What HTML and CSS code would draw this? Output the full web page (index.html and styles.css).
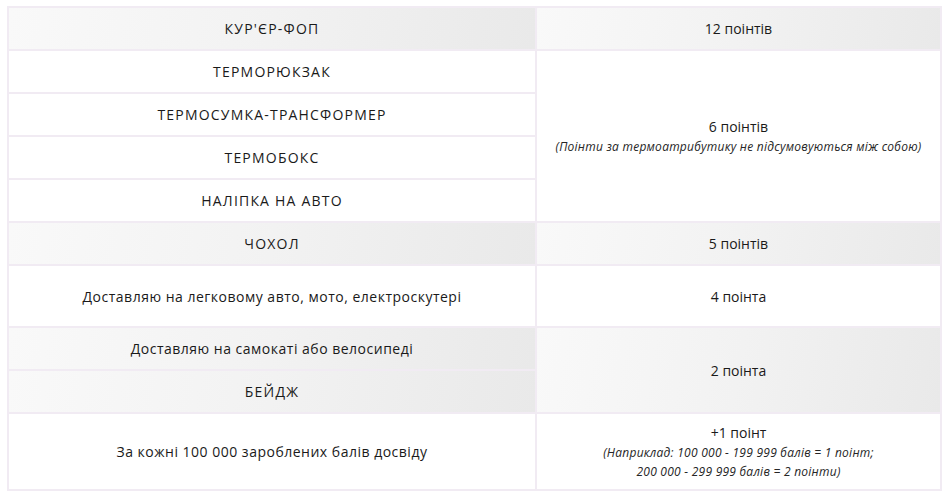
FILE: index.html
```html
<!DOCTYPE html>
<html lang="uk">
<head>
<meta charset="utf-8">
<title>Поінти</title>
<link rel="stylesheet" href="styles.css">
</head>
<body>
<div class="wrap">
<table class="points">
  <tbody>
    <tr class="r-std">
      <td class="grey caps">КУР'ЄР-ФОП</td>
      <td class="grey">12 поінтів</td>
    </tr>
    <tr class="r-std">
      <td class="caps">ТЕРМОРЮКЗАК</td>
      <td rowspan="4">6 поінтів<br><span class="note">(Поінти за термоатрибутику не підсумовуються між собою)</span></td>
    </tr>
    <tr class="r-std"><td class="caps">ТЕРМОСУМКА-ТРАНСФОРМЕР</td></tr>
    <tr class="r-std"><td class="caps">ТЕРМОБОКС</td></tr>
    <tr class="r-std"><td class="caps">НАЛІПКА НА АВТО</td></tr>
    <tr class="r-std">
      <td class="grey caps">ЧОХОЛ</td>
      <td class="grey">5 поінтів</td>
    </tr>
    <tr class="r-tall">
      <td class="wide">Доставляю на легковому авто, мото, електроскутері</td>
      <td>4 поінта</td>
    </tr>
    <tr class="r-std">
      <td class="grey wide">Доставляю на самокаті або велосипеді</td>
      <td class="grey" rowspan="2">2 поінта</td>
    </tr>
    <tr class="r-std"><td class="grey caps">БЕЙДЖ</td></tr>
    <tr class="r-last">
      <td class="wide">За кожні 100 000 зароблених балів досвіду</td>
      <td>+1 поінт<br><span class="note">(Наприклад: 100 000 - 199 999 балів = 1 поінт;<br>200 000 - 299 999 балів = 2 поінти)</span></td>
    </tr>
  </tbody>
</table>
</div>
</body>
</html>
```
FILE: styles.css
```css
html, body {
  margin: 0;
  padding: 0;
  background: #ffffff;
}
.wrap {
  padding: 6px 6px 0 7px;
}
.points {
  width: 935px;
  border-collapse: collapse;
  font-family: "Open Sans", "Noto Sans", sans-serif;
  font-size: 14px;
  color: #1a1a1a;
}
.points td {
  border: 2px solid #f1ebf3;
  text-align: center;
  vertical-align: middle;
  padding: 0 8px;
  background: #ffffff;
}
.points td:first-child {
  width: 510px;
}
.points td.grey {
  background: linear-gradient(100deg, #f9f9f9 0%, #f2f2f2 50%, #e9e9e9 100%);
}
.points td.caps {
  letter-spacing: 1.2px;
}
.points td.wide {
  letter-spacing: 0.5px;
}
.r-std td { height: 41px; }
.r-tall td { height: 60px; }
.r-last td { height: 75px; }
.note {
  font-style: italic;
  font-size: 12px;
  line-height: 16px;
  letter-spacing: 0.25px;
  color: #262626;
}
```
